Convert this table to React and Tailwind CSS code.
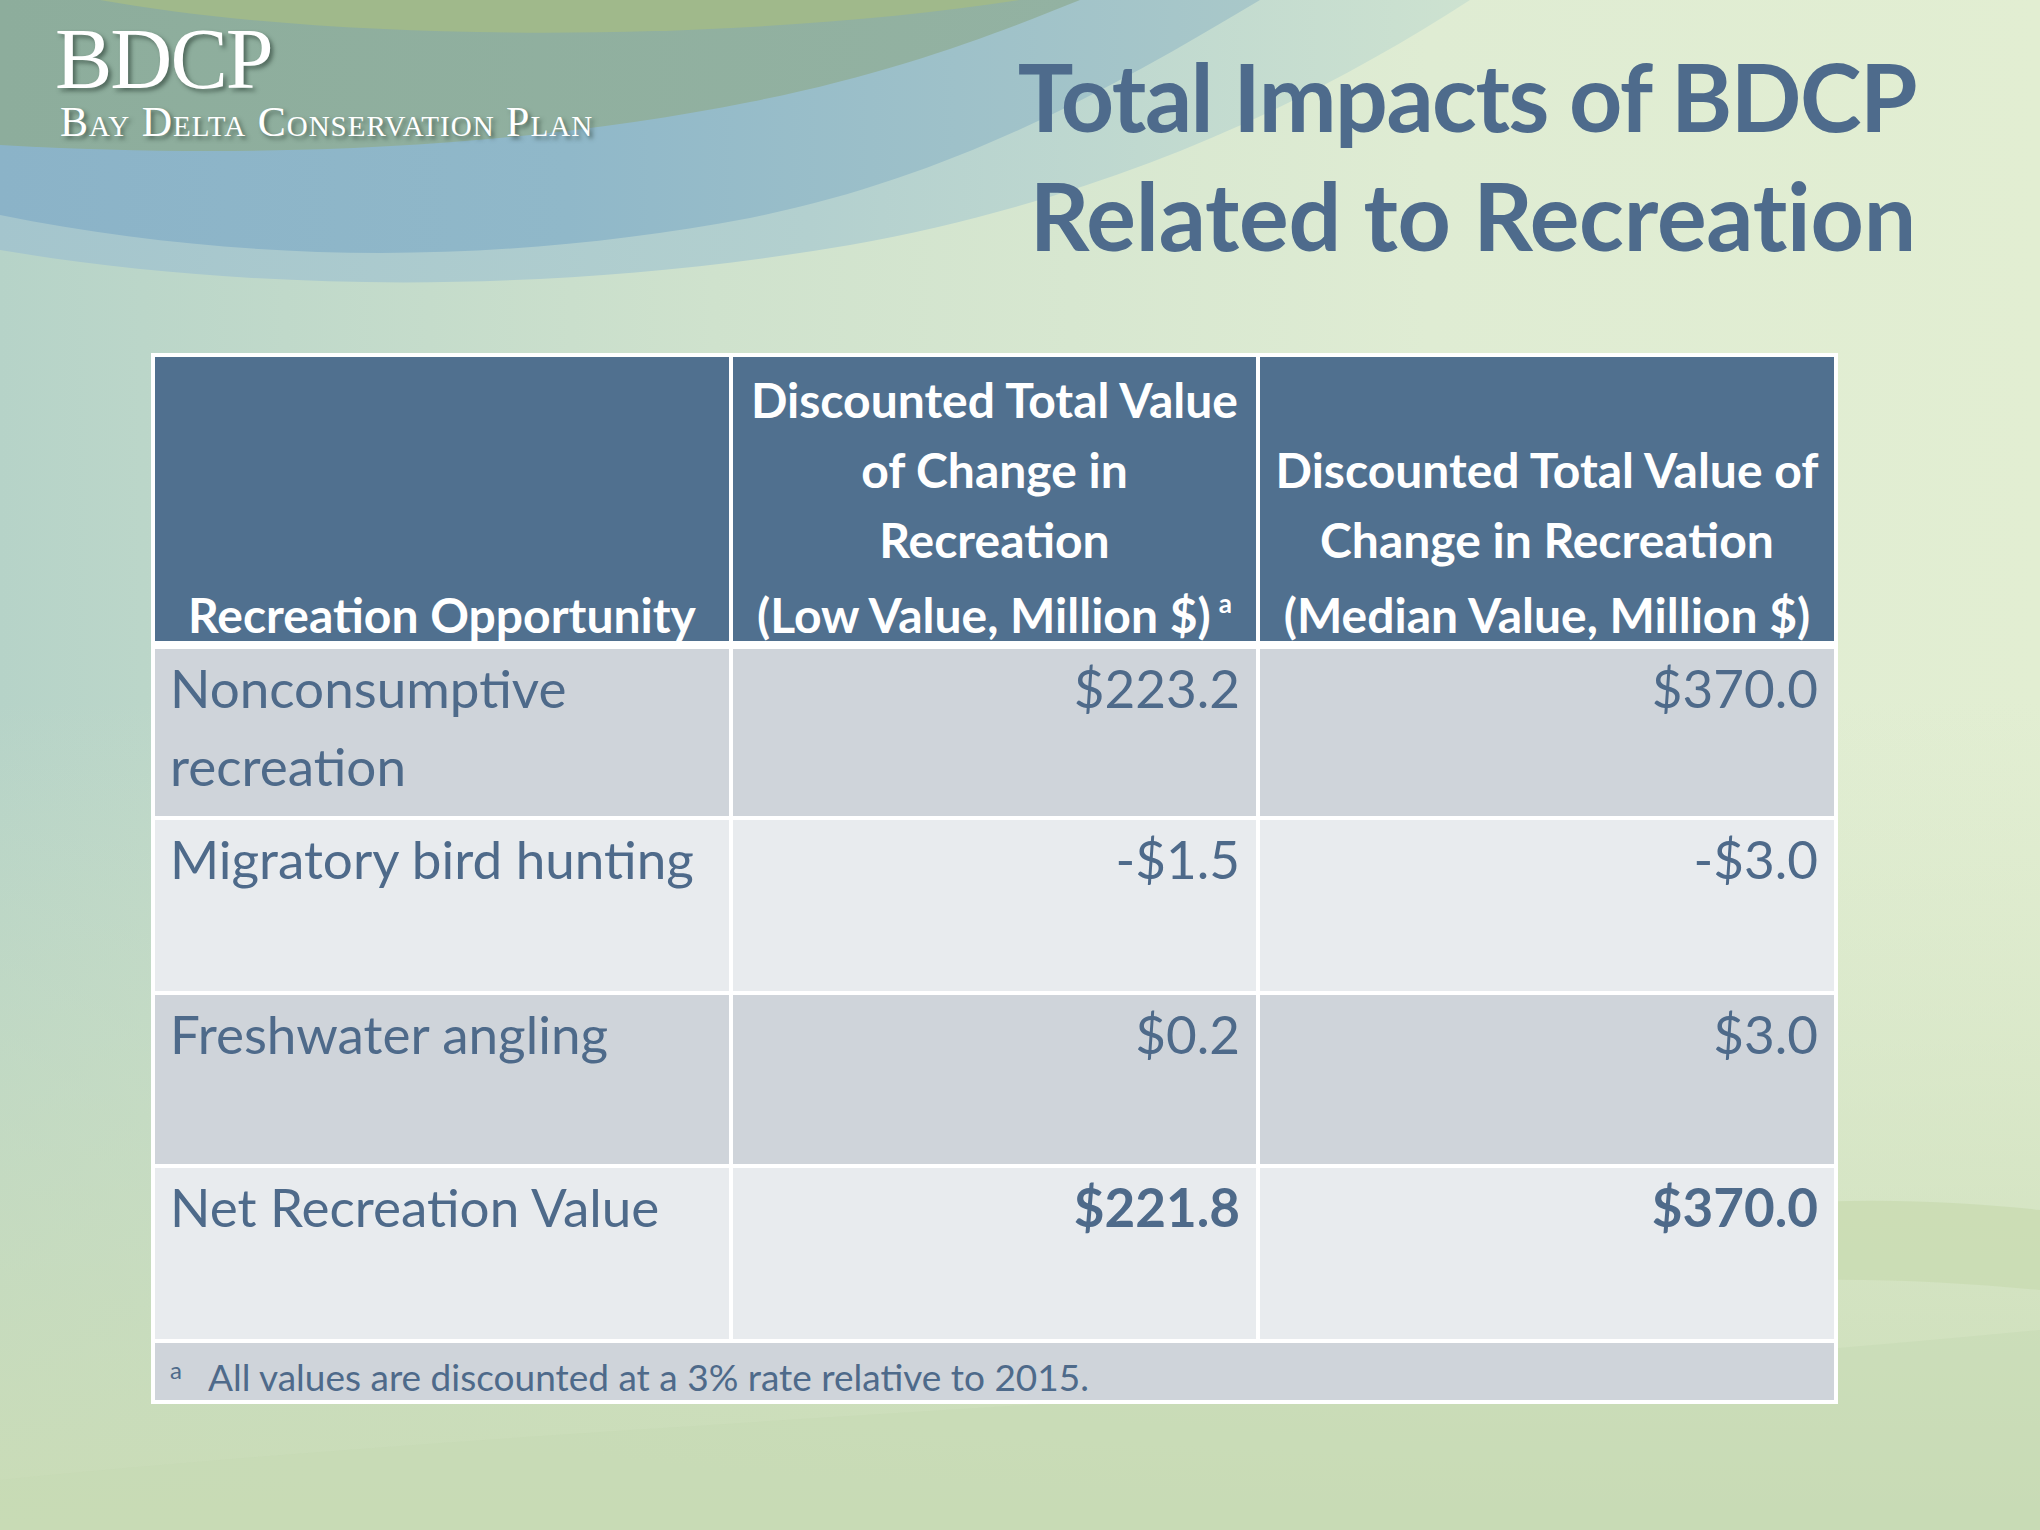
import React from "react";

function Background() {
  return (
    <svg
      className="absolute inset-0 w-full h-full"
      viewBox="0 0 2040 1530"
      preserveAspectRatio="none"
    >
      <defs>
        <linearGradient id="base" x1="0" y1="0" x2="1" y2="0">
          <stop offset="0" stopColor="#b6d3c8" />
          <stop offset="0.35" stopColor="#cfe2cd" />
          <stop offset="0.7" stopColor="#dfecd3" />
          <stop offset="1" stopColor="#e2eed2" />
        </linearGradient>
        <linearGradient id="bottom" x1="0" y1="0" x2="0" y2="1">
          <stop offset="0" stopColor="#d4e4c4" stopOpacity="0" />
          <stop offset="1" stopColor="#cadcb6" stopOpacity="1" />
        </linearGradient>
        <linearGradient id="blueOuter" x1="0" y1="0" x2="1" y2="0">
          <stop offset="0" stopColor="#a4c5cd" />
          <stop offset="0.55" stopColor="#b3d0cf" />
          <stop offset="1" stopColor="#cde2d0" />
        </linearGradient>
        <linearGradient id="blue" x1="0" y1="0" x2="1" y2="0">
          <stop offset="0" stopColor="#8bb3c8" />
          <stop offset="0.45" stopColor="#90b8c9" />
          <stop offset="1" stopColor="#a9c8c9" />
        </linearGradient>
        <linearGradient id="teal" x1="0" y1="0" x2="1" y2="0">
          <stop offset="0" stopColor="#8dad9c" />
          <stop offset="1" stopColor="#93b2a2" />
        </linearGradient>
      </defs>
      <rect x="0" y="0" width="2040" height="1530" fill="url(#base)" />
      <rect x="0" y="700" width="2040" height="830" fill="url(#bottom)" />
      <path
        d="M0,0 L0,250 C250,292 550,296 850,245 C1100,200 1300,110 1470,0 Z"
        fill="url(#blueOuter)"
      />
      <path
        d="M0,0 L0,215 C250,265 500,265 750,218 C950,178 1110,90 1260,0 Z"
        fill="url(#blue)"
      />
      <path
        d="M0,0 L0,145 C300,162 550,142 750,102 C900,72 1000,32 1080,0 Z"
        fill="url(#teal)"
      />
      <path d="M100,0 C350,45 750,42 1020,0 Z" fill="#a0b98b" />
      <path
        d="M1480,1260 C1700,1190 1900,1195 2040,1210 L2040,1290 C1880,1275 1700,1270 1480,1320 Z"
        fill="#c8daaf"
        opacity="0.7"
      />
      <path
        d="M0,1480 C600,1420 1300,1400 2040,1330 L2040,1530 L0,1530 Z"
        fill="#c6d9b4"
        opacity="0.5"
      />
    </svg>
  );
}

const bodyText = "text-[#4e6a8a] text-[53px] leading-[78px]";

function HeaderCell({ lines, sup }) {
  return (
    <div className="self-start h-[284px] bg-[#50708f] flex flex-col justify-end items-center text-center text-white font-bold text-[48px] overflow-visible">
      <div className="mb-[-9px]">
        {lines.map((l, i) => (
          <div
            key={i}
            className={
              "leading-[70px] whitespace-nowrap " +
              (i === lines.length - 1 ? "mt-[5px]" : "")
            }
          >
            {l}
            {i === lines.length - 1 && sup ? (
              <span className="text-[26px] leading-none align-top relative top-[10px] ml-[8px]">
                a
              </span>
            ) : null}
          </div>
        ))}
      </div>
    </div>
  );
}

function Row({ dark, label, v1, v2, bold }) {
  const bg = dark ? "bg-[#cfd4da]" : "bg-[#e8ebee]";
  return (
    <>
      <div className={bg + " px-[15px] " + bodyText}>{label}</div>
      <div
        className={
          bg + " pr-[16px] text-right whitespace-nowrap " + bodyText + (bold ? " font-bold" : "")
        }
      >
        {v1}
      </div>
      <div
        className={
          bg + " pr-[16px] text-right whitespace-nowrap " + bodyText + (bold ? " font-bold" : "")
        }
      >
        {v2}
      </div>
    </>
  );
}

export default function App() {
  return (
    <div className="relative w-[2040px] h-[1530px] overflow-hidden font-['Lato',sans-serif]">
      <Background />
      <div className="relative flex flex-col">
        <div className="flex justify-between items-start h-[353px]">
          <div className="pl-[55px] pt-[19px] text-white font-['Liberation_Serif',serif] [text-shadow:3px_3px_4px_rgba(40,60,50,0.6)]">
            <div className="text-[86px] leading-[80px] tracking-[-2px]">BDCP</div>
            <div className="mt-[3px] ml-[5px] text-[42px] leading-[40px] tracking-[1px] [font-variant:small-caps] whitespace-nowrap">
              Bay Delta Conservation Plan
            </div>
          </div>
          <div className="pt-[37px] pr-[124px] text-right font-bold text-[#4e6b8c] text-[93px] leading-[119px]">
            <div className="tracking-[-1.5px]">Total Impacts of BDCP</div>
            <div className="tracking-[-0.2px]">Related to Recreation</div>
          </div>
        </div>

        <div className="ml-[151px] w-fit bg-white p-[4px] grid grid-cols-[574px_523px_574px] grid-rows-[288px_167px_171px_169px_171px_57px] gap-[4px]">
          <HeaderCell lines={["Recreation Opportunity"]} />
          <HeaderCell
            lines={[
              "Discounted Total Value",
              "of Change in",
              "Recreation",
              "(Low Value, Million $)",
            ]}
            sup
          />
          <HeaderCell
            lines={[
              "Discounted Total Value of",
              "Change in Recreation",
              "(Median Value, Million $)",
            ]}
          />
          <Row
            dark
            label={
              <>
                Nonconsumptive
                <br />
                recreation
              </>
            }
            v1="$223.2"
            v2="$370.0"
          />
          <Row label="Migratory bird hunting" v1="-$1.5" v2="-$3.0" />
          <Row dark label="Freshwater angling" v1="$0.2" v2="$3.0" />
          <Row label="Net Recreation Value" v1="$221.8" v2="$370.0" bold />
          <div className="col-span-3 bg-[#cfd4da] flex items-start pl-[15px] text-[#4e6a8a]">
            <span className="w-[38px] text-[24px] leading-[24px] mt-[15px]">a</span>
            <span className="text-[37px] leading-[57px] mt-[5px] whitespace-nowrap">
              All values are discounted at a 3% rate relative to 2015.
            </span>
          </div>
        </div>
      </div>
    </div>
  );
}
